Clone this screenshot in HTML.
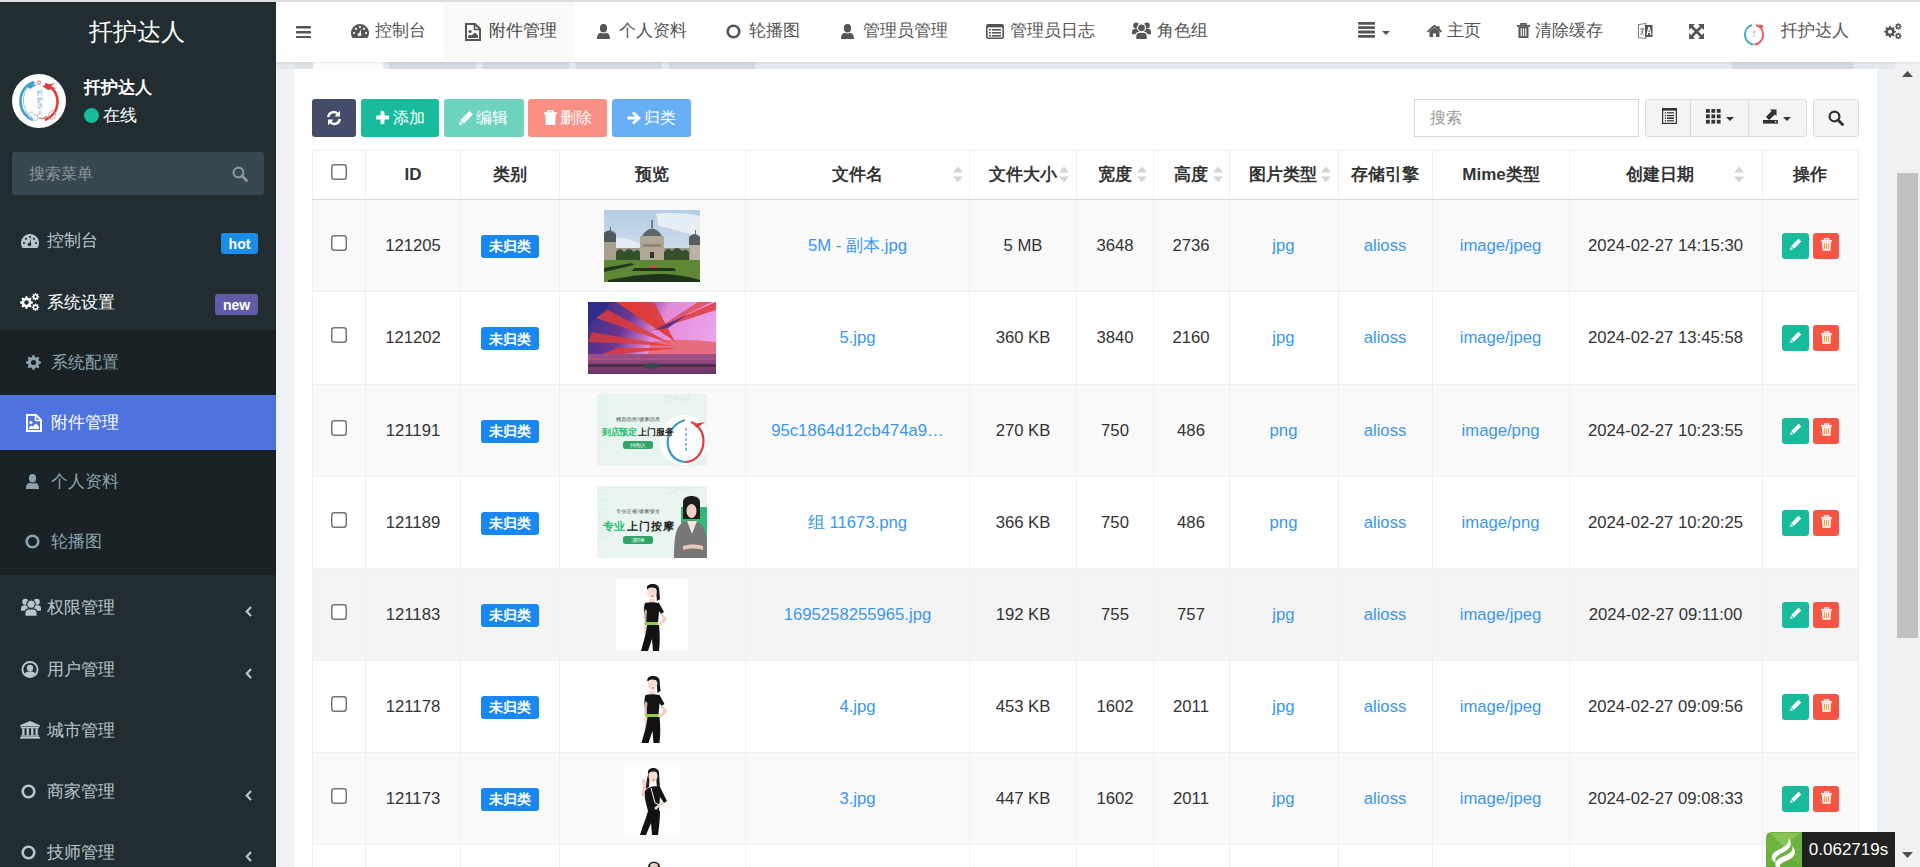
<!DOCTYPE html>
<html><head><meta charset="utf-8"><title>附件管理</title>
<style>
html,body{margin:0;padding:0;width:1920px;height:867px;overflow:hidden;font-family:"Liberation Sans", sans-serif;}
body{position:relative;}
div,span{box-sizing:border-box;}
</style></head><body>
<div style="position:absolute;left:0px;top:0px;width:1920px;height:867px;background:#eef2f5;"></div><div style="position:absolute;left:0px;top:0px;width:1920px;height:2px;background:#dcdde0;"></div><div style="position:absolute;left:0px;top:2px;width:276px;height:865px;background:#222d32;"></div><div style="position:absolute;left:-1.0px;top:16.5px;width:276px;text-align:center;height:30px;line-height:30px;font-size:24px;color:#fff;font-weight:normal;white-space:nowrap;">扦护达人</div><svg style="position:absolute;left:12px;top:74px;" width="54" height="54" viewBox="0 0 54 54"><circle cx="27" cy="27" r="27" fill="#fff"/><path d="M22 8 C13 11 8 19 8.5 28 C9 37 14 43 21 46" fill="none" stroke="#3f9fca" stroke-width="2.6"/><path d="M20 10 C14 14 11 20 11.5 28 C12 35 15 40 20 43" fill="none" stroke="#8cc6df" stroke-width="1"/><path d="M14 12 L24 8 L21 11 L26 10 L18 15Z" fill="#3f9fca"/><path d="M33 10 C41 13 46 20 45.5 29 C45 37 40 43 33 46" fill="none" stroke="#e03c3c" stroke-width="2.6"/><path d="M30 12 L43 9 L38 13 L45 14 L36 16Z" fill="#e03c3c"/><path d="M16 40 C18 37 22 38 22 41 C25 40 27 43 25 46 C21 47 17 45 16 40Z" fill="none" stroke="#b7c4cc" stroke-width="1"/><path d="M38 38 C40 35 44 37 43 40 C45 42 43 45 40 45 C37 46 35 42 38 38Z" fill="none" stroke="#ea9a9a" stroke-width="1"/><path d="M27 44 C30 45 33 44 35 42" fill="none" stroke="#c58a70" stroke-width="1.6"/><circle cx="27" cy="8.5" r="1.6" fill="none" stroke="#e03c3c" stroke-width="0.8"/><text x="24.5" y="21" font-size="5.5" fill="#4a9cc8" font-family="Liberation Sans">扦</text><text x="24.5" y="27.5" font-size="5.5" fill="#4a9cc8">护</text><text x="24.5" y="34" font-size="5.5" fill="#4a9cc8">达</text><text x="24.5" y="40.5" font-size="5.5" fill="#4a9cc8">人</text></svg><div style="position:absolute;left:84px;top:75.5px;height:23px;line-height:23px;font-size:17px;color:#fff;font-weight:bold;white-space:nowrap;">扦护达人</div><svg style="position:absolute;left:84px;top:108px;" width="15" height="15" viewBox="0 0 15 15"><circle cx="7.5" cy="7.5" r="7.5" fill="#18bc9c"/></svg><div style="position:absolute;left:103px;top:104.0px;height:23px;line-height:23px;font-size:17px;color:#fff;font-weight:normal;white-space:nowrap;">在线</div><div style="position:absolute;left:12px;top:152px;width:252px;height:43px;background:#374850;border-radius:3px;"></div><div style="position:absolute;left:28.5px;top:162.75px;height:21.5px;line-height:21.5px;font-size:15.5px;color:#8b9499;font-weight:normal;white-space:nowrap;">搜索菜单</div><svg style="position:absolute;left:232px;top:166px;" width="16" height="16" viewBox="0 0 16 16"><circle cx="6.5" cy="6.5" r="4.9" fill="none" stroke="#8b9499" stroke-width="2.2"/><path d="M10 10 L14.5 14.5" stroke="#8b9499" stroke-width="2.8000000000000003" stroke-linecap="round"/></svg><svg style="position:absolute;left:21px;top:234px;" width="18" height="14" viewBox="0 0 18 14"><path d="M1.5 14 A9 9 0 1 1 16.5 14 Z" fill="#b8c7ce"/><circle cx="3" cy="9" r="1.1" fill="#222d32"/><circle cx="5" cy="4.8" r="1.1" fill="#222d32"/><circle cx="9" cy="3" r="1.1" fill="#222d32"/><circle cx="13" cy="4.8" r="1.1" fill="#222d32"/><circle cx="15" cy="9" r="1.1" fill="#222d32"/><circle cx="8.5" cy="10.5" r="1.8" fill="#222d32"/><path d="M8 10 L10.3 4.5 L9.6 10.8Z" fill="#222d32"/></svg><div style="position:absolute;left:47px;top:228.5px;height:23px;line-height:23px;font-size:17px;color:#b8c7ce;font-weight:normal;white-space:nowrap;">控制台</div><div style="position:absolute;left:221px;top:233px;width:37px;height:21px;background:#1a8de8;border-radius:3px;"></div><div style="position:absolute;left:221.0px;top:233.5px;width:37px;text-align:center;height:20px;line-height:20px;font-size:14px;color:#fff;font-weight:bold;white-space:nowrap;">hot</div><svg style="position:absolute;left:20px;top:293px;" width="20" height="18" viewBox="0 0 20 18"><polygon points="12.97,8.86 12.97,10.14 11.09,10.89 10.73,11.76 11.52,13.62 10.62,14.52 8.76,13.73 7.89,14.09 7.14,15.97 5.86,15.97 5.11,14.09 4.24,13.73 2.38,14.52 1.48,13.62 2.27,11.76 1.91,10.89 0.03,10.14 0.03,8.86 1.91,8.11 2.27,7.24 1.48,5.38 2.38,4.48 4.24,5.27 5.11,4.91 5.86,3.03 7.14,3.03 7.89,4.91 8.76,5.27 10.62,4.48 11.52,5.38 10.73,7.24 11.09,8.11" fill="#fff"/><circle cx="6.5" cy="9.5" r="2.2" fill="#222d32"/><polygon points="19.28,3.43 19.28,4.17 18.08,4.58 17.88,5.07 18.44,6.21 17.91,6.74 16.77,6.18 16.28,6.38 15.87,7.58 15.13,7.58 14.72,6.38 14.23,6.18 13.09,6.74 12.56,6.21 13.12,5.07 12.92,4.58 11.72,4.17 11.72,3.43 12.92,3.02 13.12,2.53 12.56,1.39 13.09,0.86 14.23,1.42 14.72,1.22 15.13,0.02 15.87,0.02 16.28,1.22 16.77,1.42 17.91,0.86 18.44,1.39 17.88,2.53 18.08,3.02" fill="#fff"/><circle cx="15.5" cy="3.8" r="1.2" fill="#222d32"/><polygon points="19.28,13.83 19.28,14.57 18.08,14.98 17.88,15.47 18.44,16.61 17.91,17.14 16.77,16.58 16.28,16.78 15.87,17.98 15.13,17.98 14.72,16.78 14.23,16.58 13.09,17.14 12.56,16.61 13.12,15.47 12.92,14.98 11.72,14.57 11.72,13.83 12.92,13.42 13.12,12.93 12.56,11.79 13.09,11.26 14.23,11.82 14.72,11.62 15.13,10.42 15.87,10.42 16.28,11.62 16.77,11.82 17.91,11.26 18.44,11.79 17.88,12.93 18.08,13.42" fill="#fff"/><circle cx="15.5" cy="14.2" r="1.2" fill="#222d32"/></svg><div style="position:absolute;left:47px;top:290.5px;height:23px;line-height:23px;font-size:17px;color:#fff;font-weight:normal;white-space:nowrap;">系统设置</div><div style="position:absolute;left:215px;top:294px;width:43px;height:21px;background:#605ca8;border-radius:3px;"></div><div style="position:absolute;left:215.0px;top:294.5px;width:43px;text-align:center;height:20px;line-height:20px;font-size:14px;color:#fff;font-weight:bold;white-space:nowrap;">new</div><div style="position:absolute;left:0px;top:330px;width:276px;height:245px;background:#1a2226;"></div><svg style="position:absolute;left:26px;top:355px;" width="15" height="15" viewBox="0 0 15 15"><polygon points="14.96,6.76 14.96,8.24 12.86,9.13 12.44,10.14 13.30,12.26 12.26,13.30 10.14,12.44 9.13,12.86 8.24,14.96 6.76,14.96 5.87,12.86 4.86,12.44 2.74,13.30 1.70,12.26 2.56,10.14 2.14,9.13 0.04,8.24 0.04,6.76 2.14,5.87 2.56,4.86 1.70,2.74 2.74,1.70 4.86,2.56 5.87,2.14 6.76,0.04 8.24,0.04 9.13,2.14 10.14,2.56 12.26,1.70 13.30,2.74 12.44,4.86 12.86,5.87" fill="#8aa4af"/><circle cx="7.5" cy="7.5" r="2.6" fill="#1a2226"/></svg><div style="position:absolute;left:51px;top:350.5px;height:23px;line-height:23px;font-size:17px;color:#8aa4af;font-weight:normal;white-space:nowrap;">系统配置</div><div style="position:absolute;left:0px;top:395px;width:276px;height:55px;background:#4e73df;"></div><svg style="position:absolute;left:26px;top:414px;" width="16" height="18" viewBox="0 0 16 18"><path d="M1 1 H10 L15 6 V17 H1 Z" fill="none" stroke="#fff" stroke-width="2"/><path d="M9.5 1 V6.5 H15" fill="none" stroke="#fff" stroke-width="1.6"/><circle cx="5" cy="8.5" r="1.6" fill="#fff"/><path d="M3 15 L3 13.2 L5 11.5 L6.5 12.5 L10 9.5 L13 12.5 L13 15Z" fill="#fff"/></svg><div style="position:absolute;left:51px;top:410.5px;height:23px;line-height:23px;font-size:17px;color:#fff;font-weight:normal;white-space:nowrap;">附件管理</div><svg style="position:absolute;left:26px;top:474px;" width="13" height="15" viewBox="0 0 13 15"><ellipse cx="6.5" cy="4.2" rx="3.6" ry="4.2" fill="#8aa4af"/><path d="M0 15 C0 10.5 2 9 4 8.8 C5 9.8 8 9.8 9 8.8 C11 9 13 10.5 13 15 Z" fill="#8aa4af"/></svg><div style="position:absolute;left:51px;top:469.5px;height:23px;line-height:23px;font-size:17px;color:#8aa4af;font-weight:normal;white-space:nowrap;">个人资料</div><svg style="position:absolute;left:25px;top:533.5px;" width="15" height="15" viewBox="0 0 15 15"><circle cx="7.5" cy="7.5" r="5.8" fill="none" stroke="#8aa4af" stroke-width="2.6"/></svg><div style="position:absolute;left:51px;top:529.5px;height:23px;line-height:23px;font-size:17px;color:#8aa4af;font-weight:normal;white-space:nowrap;">轮播图</div><svg style="position:absolute;left:20.5px;top:597.5px;" width="20" height="18.5" viewBox="0 0 19.5 18"><circle cx="4.2" cy="3.6" r="3" fill="#b8c7ce"/><circle cx="15.3" cy="3.6" r="3" fill="#b8c7ce"/><path d="M0 12.5 V10 C0 8 1.5 7 3.5 7 H5 C6.5 7 7.5 8 7.5 10 V12.5Z" fill="#b8c7ce"/><path d="M12 12.5 V10 C12 8 13 7 14.5 7 H16 C18 7 19.5 8 19.5 10 V12.5Z" fill="#b8c7ce"/><circle cx="9.75" cy="6" r="4.1" fill="#b8c7ce" stroke="#222d32" stroke-width="1.2"/><path d="M3.8 18 V14.5 C3.8 12 5.5 10.5 8 10.5 H11.5 C14 10.5 15.7 12 15.7 14.5 V18Z" fill="#b8c7ce" stroke="#222d32" stroke-width="1.2"/></svg><div style="position:absolute;left:47px;top:595.5px;height:23px;line-height:23px;font-size:17px;color:#b8c7ce;font-weight:normal;white-space:nowrap;">权限管理</div><svg style="position:absolute;left:21px;top:661px;" width="18" height="18" viewBox="0 0 18 18"><circle cx="9" cy="8.5" r="8.5" fill="#b8c7ce"/><circle cx="9" cy="8.5" r="6.6" fill="#222d32"/><circle cx="9" cy="6.9" r="3.2" fill="#b8c7ce"/><path d="M3.4 13.4 C4.3 11 6.3 10.3 9 10.3 C11.7 10.3 13.7 11 14.6 13.4 C13.2 15 11.2 15.4 9 15.4 C6.8 15.4 4.8 15 3.4 13.4Z" fill="#b8c7ce"/></svg><div style="position:absolute;left:47px;top:657.5px;height:23px;line-height:23px;font-size:17px;color:#b8c7ce;font-weight:normal;white-space:nowrap;">用户管理</div><svg style="position:absolute;left:19.5px;top:721px;" width="20" height="18" viewBox="0 0 20 18"><path d="M10 0 L20 4.2 V5.5 H0 V4.2 Z" fill="#b8c7ce"/><rect x="1" y="6" width="18" height="1.3" fill="#b8c7ce"/><rect x="2.2" y="7.3" width="2.3" height="7" fill="#b8c7ce"/><rect x="6.6" y="7.3" width="2.3" height="7" fill="#b8c7ce"/><rect x="11.1" y="7.3" width="2.3" height="7" fill="#b8c7ce"/><rect x="15.5" y="7.3" width="2.3" height="7" fill="#b8c7ce"/><rect x="1" y="14.3" width="18" height="1.4" fill="#b8c7ce"/><rect x="0" y="16" width="20" height="1.6" fill="#b8c7ce"/></svg><div style="position:absolute;left:47px;top:718.5px;height:23px;line-height:23px;font-size:17px;color:#b8c7ce;font-weight:normal;white-space:nowrap;">城市管理</div><svg style="position:absolute;left:21px;top:783.5px;" width="15" height="15" viewBox="0 0 15 15"><circle cx="7.5" cy="7.5" r="5.8" fill="none" stroke="#b8c7ce" stroke-width="2.6"/></svg><div style="position:absolute;left:47px;top:779.5px;height:23px;line-height:23px;font-size:17px;color:#b8c7ce;font-weight:normal;white-space:nowrap;">商家管理</div><svg style="position:absolute;left:21px;top:844.5px;" width="15" height="15" viewBox="0 0 15 15"><circle cx="7.5" cy="7.5" r="5.8" fill="none" stroke="#b8c7ce" stroke-width="2.6"/></svg><div style="position:absolute;left:47px;top:840.5px;height:23px;line-height:23px;font-size:17px;color:#b8c7ce;font-weight:normal;white-space:nowrap;">技师管理</div><svg style="position:absolute;left:245px;top:605.5px;" width="8" height="11" viewBox="0 0 8 11"><path d="M6 1 L1.8 5.5 L6 10" fill="none" stroke="#b8c7ce" stroke-width="2.2"/></svg><svg style="position:absolute;left:245px;top:667.5px;" width="8" height="11" viewBox="0 0 8 11"><path d="M6 1 L1.8 5.5 L6 10" fill="none" stroke="#b8c7ce" stroke-width="2.2"/></svg><svg style="position:absolute;left:245px;top:789.5px;" width="8" height="11" viewBox="0 0 8 11"><path d="M6 1 L1.8 5.5 L6 10" fill="none" stroke="#b8c7ce" stroke-width="2.2"/></svg><svg style="position:absolute;left:245px;top:850.5px;" width="8" height="11" viewBox="0 0 8 11"><path d="M6 1 L1.8 5.5 L6 10" fill="none" stroke="#b8c7ce" stroke-width="2.2"/></svg><div style="position:absolute;left:276px;top:2px;width:1644px;height:60px;background:#fff;box-shadow:0 1px 2px rgba(0,0,0,0.08);z-index:2;"></div><div style="position:absolute;left:276px;top:2px;width:1644px;height:60px;z-index:3;"><div style="position:absolute;left:168px;top:0px;width:130px;height:60px;background:#f9f9f8;"></div><svg style="position:absolute;left:19.5px;top:23.5px;" width="15" height="12.5" viewBox="0 0 15 12.5"><rect x="0" y="0.00" width="15" height="2.6" rx="0.8" fill="#555"/><rect x="0" y="4.95" width="15" height="2.6" rx="0.8" fill="#555"/><rect x="0" y="9.90" width="15" height="2.6" rx="0.8" fill="#555"/></svg><svg style="position:absolute;left:74.5px;top:21.5px;" width="18" height="14" viewBox="0 0 18 14"><path d="M1.5 14 A9 9 0 1 1 16.5 14 Z" fill="#555"/><circle cx="3" cy="9" r="1.1" fill="#fff"/><circle cx="5" cy="4.8" r="1.1" fill="#fff"/><circle cx="9" cy="3" r="1.1" fill="#fff"/><circle cx="13" cy="4.8" r="1.1" fill="#fff"/><circle cx="15" cy="9" r="1.1" fill="#fff"/><circle cx="8.5" cy="10.5" r="1.8" fill="#fff"/><path d="M8 10 L10.3 4.5 L9.6 10.8Z" fill="#fff"/></svg><div style="position:absolute;left:98.5px;top:17.0px;height:23px;line-height:23px;font-size:17px;color:#555;font-weight:normal;white-space:nowrap;">控制台</div><svg style="position:absolute;left:189px;top:20.5px;" width="16" height="18" viewBox="0 0 16 18"><path d="M1 1 H10 L15 6 V17 H1 Z" fill="none" stroke="#555" stroke-width="2"/><path d="M9.5 1 V6.5 H15" fill="none" stroke="#555" stroke-width="1.6"/><circle cx="5" cy="8.5" r="1.6" fill="#555"/><path d="M3 15 L3 13.2 L5 11.5 L6.5 12.5 L10 9.5 L13 12.5 L13 15Z" fill="#555"/></svg><div style="position:absolute;left:212.5px;top:17.0px;height:23px;line-height:23px;font-size:17px;color:#444;font-weight:normal;white-space:nowrap;">附件管理</div><svg style="position:absolute;left:321px;top:21.5px;" width="13" height="15" viewBox="0 0 13 15"><ellipse cx="6.5" cy="4.2" rx="3.6" ry="4.2" fill="#555"/><path d="M0 15 C0 10.5 2 9 4 8.8 C5 9.8 8 9.8 9 8.8 C11 9 13 10.5 13 15 Z" fill="#555"/></svg><div style="position:absolute;left:343px;top:17.0px;height:23px;line-height:23px;font-size:17px;color:#555;font-weight:normal;white-space:nowrap;">个人资料</div><svg style="position:absolute;left:450px;top:21.5px;" width="15" height="15" viewBox="0 0 15 15"><circle cx="7.5" cy="7.5" r="5.8" fill="none" stroke="#555" stroke-width="2.6"/></svg><div style="position:absolute;left:472.5px;top:17.0px;height:23px;line-height:23px;font-size:17px;color:#555;font-weight:normal;white-space:nowrap;">轮播图</div><svg style="position:absolute;left:565px;top:21.5px;" width="13" height="15" viewBox="0 0 13 15"><ellipse cx="6.5" cy="4.2" rx="3.6" ry="4.2" fill="#555"/><path d="M0 15 C0 10.5 2 9 4 8.8 C5 9.8 8 9.8 9 8.8 C11 9 13 10.5 13 15 Z" fill="#555"/></svg><div style="position:absolute;left:586.5px;top:17.0px;height:23px;line-height:23px;font-size:17px;color:#555;font-weight:normal;white-space:nowrap;">管理员管理</div><svg style="position:absolute;left:709.5px;top:21.5px;" width="18" height="15" viewBox="0 0 18 15"><rect x="0.8" y="0.8" width="16.4" height="13.4" rx="1.5" fill="none" stroke="#555" stroke-width="1.6"/><rect x="0.8" y="0.8" width="16.4" height="2.6" fill="#555"/><rect x="3" y="5" width="2" height="1.6" fill="#555"/><rect x="6" y="5" width="9" height="1.6" fill="#555"/><rect x="3" y="8" width="2" height="1.6" fill="#555"/><rect x="6" y="8" width="9" height="1.6" fill="#555"/><rect x="3" y="11" width="2" height="1.6" fill="#555"/><rect x="6" y="11" width="9" height="1.6" fill="#555"/></svg><div style="position:absolute;left:733.5px;top:17.0px;height:23px;line-height:23px;font-size:17px;color:#555;font-weight:normal;white-space:nowrap;">管理员日志</div><svg style="position:absolute;left:856px;top:20px;" width="19" height="17.5" viewBox="0 0 19.5 18"><circle cx="4.2" cy="3.6" r="3" fill="#555"/><circle cx="15.3" cy="3.6" r="3" fill="#555"/><path d="M0 12.5 V10 C0 8 1.5 7 3.5 7 H5 C6.5 7 7.5 8 7.5 10 V12.5Z" fill="#555"/><path d="M12 12.5 V10 C12 8 13 7 14.5 7 H16 C18 7 19.5 8 19.5 10 V12.5Z" fill="#555"/><circle cx="9.75" cy="6" r="4.1" fill="#555" stroke="#fff" stroke-width="1.2"/><path d="M3.8 18 V14.5 C3.8 12 5.5 10.5 8 10.5 H11.5 C14 10.5 15.7 12 15.7 14.5 V18Z" fill="#555" stroke="#fff" stroke-width="1.2"/></svg><div style="position:absolute;left:880.5px;top:17.0px;height:23px;line-height:23px;font-size:17px;color:#555;font-weight:normal;white-space:nowrap;">角色组</div><svg style="position:absolute;left:1082px;top:20px;" width="17" height="16" viewBox="0 0 17 16"><rect x="0" y="0.00" width="17" height="2.8" rx="0.8" fill="#555"/><rect x="0" y="4.30" width="17" height="2.8" rx="0.8" fill="#555"/><rect x="0" y="8.60" width="17" height="2.8" rx="0.8" fill="#555"/><rect x="0" y="12.90" width="17" height="2.8" rx="0.8" fill="#555"/></svg><svg style="position:absolute;left:1106px;top:29px;" width="8" height="4" viewBox="0 0 8 4"><path d="M0 0 H8 L4 4Z" fill="#555"/></svg><svg style="position:absolute;left:1151px;top:22.5px;" width="15" height="12.5" viewBox="0 0 15 12.5"><path d="M0.5 6.8 L7.5 0.8 L14.5 6.8" fill="none" stroke="#555" stroke-width="1.8" stroke-linejoin="round"/><path d="M2.5 6.5 L7.5 2.5 L12.5 6.5 V12 H9 V8.5 H6 V12 H2.5Z" fill="#555"/><rect x="10.5" y="1" width="2" height="3.5" fill="#555"/></svg><div style="position:absolute;left:1170.5px;top:17.0px;height:23px;line-height:23px;font-size:17px;color:#555;font-weight:normal;white-space:nowrap;">主页</div><svg style="position:absolute;left:1241px;top:21px;" width="13" height="15" viewBox="0 0 13 15"><rect x="0" y="2" width="13" height="1.8" fill="#555"/><path d="M4 2.2 V0.9 H9 V2.2" fill="none" stroke="#555" stroke-width="1.6"/><path d="M1.5 3.8 H11.5 V14.2 Q11.5 15 10.7 15 H2.3 Q1.5 15 1.5 14.2Z" fill="#555"/><rect x="3.6" y="5.3" width="1.2" height="8" fill="#fff"/><rect x="5.9" y="5.3" width="1.2" height="8" fill="#fff"/><rect x="8.2" y="5.3" width="1.2" height="8" fill="#fff"/></svg><div style="position:absolute;left:1259px;top:17.0px;height:23px;line-height:23px;font-size:17px;color:#555;font-weight:normal;white-space:nowrap;">清除缓存</div><svg style="position:absolute;left:1362px;top:20.5px;" width="15" height="16" viewBox="0 0 15 16"><path d="M0.5 1.5 L8 0.5 V15.5 L0.5 14.5Z" fill="#fff" stroke="#555" stroke-width="0.8"/><path d="M7 2 H14.5 V14 H7Z" fill="#555"/><path d="M9 12 L10.7 4.5 H11.3 L13 12 M9.8 9.5 H12.2" fill="none" stroke="#fff" stroke-width="1.2"/><path d="M2 6 H6 M4 5 V6 M2.5 12 C4 10 5 8 5.2 6 M3.5 8 C4 10 5 11 6 12" fill="none" stroke="#555" stroke-width="0.8"/></svg><svg style="position:absolute;left:1412.5px;top:21.5px;" width="15" height="15" viewBox="0 0 15 15"><path d="M0 0 H6 L0 6Z M15 0 H9 L15 6Z M0 15 H6 L0 9Z M15 15 H9 L15 9Z" fill="#555"/><path d="M2 2 L13 13 M13 2 L2 13" stroke="#555" stroke-width="2.8"/></svg><svg style="position:absolute;left:1467px;top:20.5px;" width="22" height="23" viewBox="0 0 22 23"><path d="M9 2 C4 3.5 1.5 8 2 13 C2.5 17.5 6 21 10.5 21.5" fill="none" stroke="#4ba3c7" stroke-width="2"/><path d="M13 2 C18 3.5 20.5 8 20 13 C19.5 17.5 16 21 11.5 21.5" fill="none" stroke="#e8595b" stroke-width="2"/><path d="M16 1 L21 3 L18 6Z" fill="#e8595b"/><path d="M11 7 V14 M9 9 H13" stroke="#9cc" stroke-width="0.8"/></svg><div style="position:absolute;left:1505px;top:17.0px;height:23px;line-height:23px;font-size:17px;color:#555;font-weight:normal;white-space:nowrap;">扦护达人</div><svg style="position:absolute;left:1608px;top:20.5px;" width="18" height="16.5" viewBox="0 0 19.5 18"><polygon points="12.97,8.86 12.97,10.14 11.09,10.89 10.73,11.76 11.52,13.62 10.62,14.52 8.76,13.73 7.89,14.09 7.14,15.97 5.86,15.97 5.11,14.09 4.24,13.73 2.38,14.52 1.48,13.62 2.27,11.76 1.91,10.89 0.03,10.14 0.03,8.86 1.91,8.11 2.27,7.24 1.48,5.38 2.38,4.48 4.24,5.27 5.11,4.91 5.86,3.03 7.14,3.03 7.89,4.91 8.76,5.27 10.62,4.48 11.52,5.38 10.73,7.24 11.09,8.11" fill="#555"/><circle cx="6.5" cy="9.5" r="2.2" fill="#fff"/><polygon points="19.28,3.43 19.28,4.17 18.08,4.58 17.88,5.07 18.44,6.21 17.91,6.74 16.77,6.18 16.28,6.38 15.87,7.58 15.13,7.58 14.72,6.38 14.23,6.18 13.09,6.74 12.56,6.21 13.12,5.07 12.92,4.58 11.72,4.17 11.72,3.43 12.92,3.02 13.12,2.53 12.56,1.39 13.09,0.86 14.23,1.42 14.72,1.22 15.13,0.02 15.87,0.02 16.28,1.22 16.77,1.42 17.91,0.86 18.44,1.39 17.88,2.53 18.08,3.02" fill="#555"/><circle cx="15.5" cy="3.8" r="1.2" fill="#fff"/><polygon points="19.28,13.83 19.28,14.57 18.08,14.98 17.88,15.47 18.44,16.61 17.91,17.14 16.77,16.58 16.28,16.78 15.87,17.98 15.13,17.98 14.72,16.78 14.23,16.58 13.09,17.14 12.56,16.61 13.12,15.47 12.92,14.98 11.72,14.57 11.72,13.83 12.92,13.42 13.12,12.93 12.56,11.79 13.09,11.26 14.23,11.82 14.72,11.62 15.13,10.42 15.87,10.42 16.28,11.62 16.77,11.82 17.91,11.26 18.44,11.79 17.88,12.93 18.08,13.42" fill="#555"/><circle cx="15.5" cy="14.2" r="1.2" fill="#fff"/></svg></div><div style="position:absolute;left:276px;top:62px;width:1619px;height:7px;background:#e4e8ec;"></div><div style="position:absolute;left:294px;top:62px;width:19px;height:7px;background:#dfe3e8;"></div><div style="position:absolute;left:313px;top:62px;width:70px;height:7px;background:#fbfbfc;"></div><div style="position:absolute;left:389px;top:62px;width:87px;height:7px;background:#d3d9e0;"></div><div style="position:absolute;left:483px;top:62px;width:86px;height:7px;background:#d3d9e0;"></div><div style="position:absolute;left:576px;top:62px;width:86px;height:7px;background:#d3d9e0;"></div><div style="position:absolute;left:669px;top:62px;width:86px;height:7px;background:#d3d9e0;"></div><div style="position:absolute;left:1732px;top:62px;width:121px;height:7px;background:#d3d9e0;"></div><div style="position:absolute;left:294px;top:69px;width:1583px;height:798px;background:#fff;"></div><div style="position:absolute;left:312px;top:99px;width:44px;height:38px;background:#444c69;border-radius:3px;"></div><svg style="position:absolute;left:326px;top:110px;" width="16" height="16" viewBox="0 0 16 16"><path d="M2.2 7 A5.5 5.5 0 0 1 12 4.2" fill="none" stroke="#fff" stroke-width="2.4"/><path d="M14 0.8 V6.5 H8.5Z" fill="#fff"/><path d="M13.8 9 A5.5 5.5 0 0 1 4 11.8" fill="none" stroke="#fff" stroke-width="2.4"/><path d="M2 15.2 V9.5 H7.5Z" fill="#fff"/></svg><div style="position:absolute;left:361px;top:99px;width:78px;height:38px;background:#18bc9c;border-radius:3px;"></div><svg style="position:absolute;left:376px;top:111.0px;" width="13" height="13" viewBox="0 0 13 13"><rect x="4.6" y="0" width="3.8" height="13" rx="0.8" fill="#fff"/><rect x="0" y="4.6" width="13" height="3.8" rx="0.8" fill="#fff"/></svg><div style="position:absolute;left:392.5px;top:106.5px;height:22px;line-height:22px;font-size:16px;color:#fff;font-weight:normal;white-space:nowrap;">添加</div><div style="position:absolute;left:444px;top:99px;width:80px;height:38px;background:#6dd3bf;border-radius:3px;"></div><svg style="position:absolute;left:459px;top:110.0px;" width="15" height="15" viewBox="0 0 15 15"><path d="M10.5 1 L14 4.5 L5 13.5 L1.5 10Z" fill="#fff"/><path d="M1 11 L4 14 L0 15Z" fill="#fff"/></svg><div style="position:absolute;left:476px;top:106.5px;height:22px;line-height:22px;font-size:16px;color:#fff;font-weight:normal;white-space:nowrap;">编辑</div><div style="position:absolute;left:528px;top:99px;width:79px;height:38px;background:#fa9085;border-radius:3px;"></div><svg style="position:absolute;left:544px;top:110.0px;" width="13" height="15" viewBox="0 0 13 15"><rect x="0" y="2.2" width="13" height="1.8" fill="#fff"/><path d="M4 2.2 V0.8 H9 V2.2" fill="none" stroke="#fff" stroke-width="1.5"/><path d="M1.2 4 H11.8 L11.2 15 H1.8Z" fill="#fff"/><rect x="3.3" y="5.5" width="1.2" height="7" fill="#fff" opacity="0"/></svg><div style="position:absolute;left:560px;top:106.5px;height:22px;line-height:22px;font-size:16px;color:#fff;font-weight:normal;white-space:nowrap;">删除</div><div style="position:absolute;left:612px;top:99px;width:79px;height:38px;background:#67aff5;border-radius:3px;"></div><svg style="position:absolute;left:627px;top:110.5px;" width="14" height="14" viewBox="0 0 14 14"><path d="M7 0.5 L14 7 L7 13.5 L5 11.5 L8.3 8.5 H0.5 V5.5 H8.3 L5 2.5Z" fill="#fff"/></svg><div style="position:absolute;left:644px;top:106.5px;height:22px;line-height:22px;font-size:16px;color:#fff;font-weight:normal;white-space:nowrap;">归类</div><div style="position:absolute;left:1414px;top:99px;width:225px;height:38px;background:#fff;border:1px solid #d2d6de;"></div><div style="position:absolute;left:1430px;top:107.0px;height:22px;line-height:22px;font-size:16px;color:#999;font-weight:normal;white-space:nowrap;">搜索</div><div style="position:absolute;left:1645px;top:99px;width:162px;height:38px;background:#f4f4f4;border:1px solid #ddd;border-radius:3px;"></div><div style="position:absolute;left:1690px;top:99px;width:1px;height:38px;background:#ddd;"></div><div style="position:absolute;left:1748px;top:99px;width:1px;height:38px;background:#ddd;"></div><svg style="position:absolute;left:1661.5px;top:108px;" width="15" height="16" viewBox="0 0 15 16"><rect x="0.6" y="0.6" width="13.8" height="14.8" fill="none" stroke="#333" stroke-width="1.2"/><rect x="0" y="0" width="15" height="2.6" fill="#333"/><rect x="2.8" y="4.2" width="1.3" height="1.3" fill="#333"/><rect x="5" y="4.2" width="7" height="1.2" fill="#333"/><rect x="2.8" y="7" width="1.3" height="1.3" fill="#333"/><rect x="5" y="7" width="7" height="1.2" fill="#333"/><rect x="2.8" y="9.6" width="1.3" height="1.3" fill="#333"/><rect x="5" y="9.4" width="7" height="1.6" fill="#333"/><rect x="2.8" y="12.2" width="1.3" height="1.3" fill="#333"/><rect x="5" y="12.2" width="7" height="1.2" fill="#333"/></svg><svg style="position:absolute;left:1706px;top:109px;" width="15" height="15" viewBox="0 0 15 15"><rect x="0.0" y="0.0" width="3.8" height="3.8" fill="#333"/><rect x="5.4" y="0.0" width="3.8" height="3.8" fill="#333"/><rect x="10.8" y="0.0" width="3.8" height="3.8" fill="#333"/><rect x="0.0" y="5.4" width="3.8" height="3.8" fill="#333"/><rect x="5.4" y="5.4" width="3.8" height="3.8" fill="#333"/><rect x="10.8" y="5.4" width="3.8" height="3.8" fill="#333"/><rect x="0.0" y="10.8" width="3.8" height="3.8" fill="#333"/><rect x="5.4" y="10.8" width="3.8" height="3.8" fill="#333"/><rect x="10.8" y="10.8" width="3.8" height="3.8" fill="#333"/></svg><svg style="position:absolute;left:1726px;top:117px;" width="8" height="4" viewBox="0 0 8 4"><path d="M0 0 H8 L4 4Z" fill="#333"/></svg><svg style="position:absolute;left:1763px;top:108px;" width="15" height="16" viewBox="0 0 15 16"><rect x="0" y="12" width="15" height="3.6" fill="#333"/><rect x="12" y="13" width="1.3" height="1.3" fill="#f4f4f4"/><path d="M4 10 L3 8.8 L8.5 3.2 L6.8 1.5 H13.5 V8.2 L11.8 6.5 L6.2 12Z" fill="#333"/></svg><svg style="position:absolute;left:1783px;top:117px;" width="8" height="4" viewBox="0 0 8 4"><path d="M0 0 H8 L4 4Z" fill="#333"/></svg><div style="position:absolute;left:1813px;top:99px;width:46px;height:38px;background:#f4f4f4;border:1px solid #ddd;border-radius:3px;"></div><svg style="position:absolute;left:1828px;top:110px;" width="16" height="16" viewBox="0 0 16 16"><circle cx="6.5" cy="6.5" r="4.9" fill="none" stroke="#333" stroke-width="2.3"/><path d="M10 10 L14.5 14.5" stroke="#333" stroke-width="2.9" stroke-linecap="round"/></svg><div style="position:absolute;left:312px;top:150px;width:1546px;height:49px;background:#fff;border-top:1px solid #f0f0f0;"></div><div style="position:absolute;left:312px;top:200px;width:1546px;height:91px;background:#f9f9f9;"></div><div style="position:absolute;left:312px;top:291px;width:1546px;height:1px;background:#f0f0f0;"></div><div style="position:absolute;left:312px;top:292px;width:1546px;height:92px;background:#fff;"></div><div style="position:absolute;left:312px;top:384px;width:1546px;height:1px;background:#f0f0f0;"></div><div style="position:absolute;left:312px;top:385px;width:1546px;height:91px;background:#f9f9f9;"></div><div style="position:absolute;left:312px;top:476px;width:1546px;height:1px;background:#f0f0f0;"></div><div style="position:absolute;left:312px;top:477px;width:1546px;height:91px;background:#fff;"></div><div style="position:absolute;left:312px;top:568px;width:1546px;height:1px;background:#f0f0f0;"></div><div style="position:absolute;left:312px;top:569px;width:1546px;height:91px;background:#f4f4f4;"></div><div style="position:absolute;left:312px;top:660px;width:1546px;height:1px;background:#f0f0f0;"></div><div style="position:absolute;left:312px;top:661px;width:1546px;height:91px;background:#fff;"></div><div style="position:absolute;left:312px;top:752px;width:1546px;height:1px;background:#f0f0f0;"></div><div style="position:absolute;left:312px;top:753px;width:1546px;height:91px;background:#f9f9f9;"></div><div style="position:absolute;left:312px;top:844px;width:1546px;height:1px;background:#f0f0f0;"></div><div style="position:absolute;left:312px;top:845px;width:1546px;height:22px;background:#fff;"></div><div style="position:absolute;left:312px;top:150px;width:1px;height:717px;background:#f0f0f0;"></div><div style="position:absolute;left:365px;top:150px;width:1px;height:717px;background:#f0f0f0;"></div><div style="position:absolute;left:460px;top:150px;width:1px;height:717px;background:#f0f0f0;"></div><div style="position:absolute;left:559px;top:150px;width:1px;height:717px;background:#f0f0f0;"></div><div style="position:absolute;left:745px;top:150px;width:1px;height:717px;background:#f0f0f0;"></div><div style="position:absolute;left:969px;top:150px;width:1px;height:717px;background:#f0f0f0;"></div><div style="position:absolute;left:1076px;top:150px;width:1px;height:717px;background:#f0f0f0;"></div><div style="position:absolute;left:1153px;top:150px;width:1px;height:717px;background:#f0f0f0;"></div><div style="position:absolute;left:1229px;top:150px;width:1px;height:717px;background:#f0f0f0;"></div><div style="position:absolute;left:1338px;top:150px;width:1px;height:717px;background:#f0f0f0;"></div><div style="position:absolute;left:1432px;top:150px;width:1px;height:717px;background:#f0f0f0;"></div><div style="position:absolute;left:1569px;top:150px;width:1px;height:717px;background:#f0f0f0;"></div><div style="position:absolute;left:1762px;top:150px;width:1px;height:717px;background:#f0f0f0;"></div><div style="position:absolute;left:1858px;top:150px;width:1px;height:717px;background:#f0f0f0;"></div><div style="position:absolute;left:312px;top:199px;width:1546px;height:1px;background:#dadada;"></div><svg style="position:absolute;left:331px;top:164px;" width="16" height="16" viewBox="0 0 16 16"><rect x="0.75" y="0.75" width="14.5" height="14.5" rx="2.5" fill="#fff" stroke="#767676" stroke-width="1.5"/></svg><div style="position:absolute;left:313.0px;top:162.5px;width:200px;text-align:center;height:23px;line-height:23px;font-size:17px;color:#333;font-weight:bold;white-space:nowrap;">ID</div><div style="position:absolute;left:409.5px;top:162.5px;width:200px;text-align:center;height:23px;line-height:23px;font-size:17px;color:#333;font-weight:bold;white-space:nowrap;">类别</div><div style="position:absolute;left:552.0px;top:162.5px;width:200px;text-align:center;height:23px;line-height:23px;font-size:17px;color:#333;font-weight:bold;white-space:nowrap;">预览</div><div style="position:absolute;left:757.5px;top:162.5px;width:200px;text-align:center;height:23px;line-height:23px;font-size:17px;color:#333;font-weight:bold;white-space:nowrap;">文件名</div><svg style="position:absolute;left:952.5px;top:166px;" width="10" height="17" viewBox="0 0 10 16"><path d="M5 0 L10 6 H0Z M5 16 L10 10 H0Z" fill="#d5d5d5"/></svg><div style="position:absolute;left:923.0px;top:162.5px;width:200px;text-align:center;height:23px;line-height:23px;font-size:17px;color:#333;font-weight:bold;white-space:nowrap;">文件大小</div><svg style="position:absolute;left:1059px;top:166px;" width="10" height="17" viewBox="0 0 10 16"><path d="M5 0 L10 6 H0Z M5 16 L10 10 H0Z" fill="#d5d5d5"/></svg><div style="position:absolute;left:1014.7px;top:162.5px;width:200px;text-align:center;height:23px;line-height:23px;font-size:17px;color:#333;font-weight:bold;white-space:nowrap;">宽度</div><svg style="position:absolute;left:1137px;top:166px;" width="10" height="17" viewBox="0 0 10 16"><path d="M5 0 L10 6 H0Z M5 16 L10 10 H0Z" fill="#d5d5d5"/></svg><div style="position:absolute;left:1091.4px;top:162.5px;width:200px;text-align:center;height:23px;line-height:23px;font-size:17px;color:#333;font-weight:bold;white-space:nowrap;">高度</div><svg style="position:absolute;left:1212.5px;top:166px;" width="10" height="17" viewBox="0 0 10 16"><path d="M5 0 L10 6 H0Z M5 16 L10 10 H0Z" fill="#d5d5d5"/></svg><div style="position:absolute;left:1183.3px;top:162.5px;width:200px;text-align:center;height:23px;line-height:23px;font-size:17px;color:#333;font-weight:bold;white-space:nowrap;">图片类型</div><svg style="position:absolute;left:1321px;top:166px;" width="10" height="17" viewBox="0 0 10 16"><path d="M5 0 L10 6 H0Z M5 16 L10 10 H0Z" fill="#d5d5d5"/></svg><div style="position:absolute;left:1285.0px;top:162.5px;width:200px;text-align:center;height:23px;line-height:23px;font-size:17px;color:#333;font-weight:bold;white-space:nowrap;">存储引擎</div><div style="position:absolute;left:1401.0px;top:162.5px;width:200px;text-align:center;height:23px;line-height:23px;font-size:17px;color:#333;font-weight:bold;white-space:nowrap;">Mime类型</div><div style="position:absolute;left:1559.5px;top:162.5px;width:200px;text-align:center;height:23px;line-height:23px;font-size:17px;color:#333;font-weight:bold;white-space:nowrap;">创建日期</div><svg style="position:absolute;left:1734px;top:166px;" width="10" height="17" viewBox="0 0 10 16"><path d="M5 0 L10 6 H0Z M5 16 L10 10 H0Z" fill="#d5d5d5"/></svg><div style="position:absolute;left:1710.0px;top:162.5px;width:200px;text-align:center;height:23px;line-height:23px;font-size:17px;color:#333;font-weight:bold;white-space:nowrap;">操作</div><svg style="position:absolute;left:331px;top:234.5px;" width="16" height="16" viewBox="0 0 16 16"><rect x="0.75" y="0.75" width="14.5" height="14.5" rx="2.5" fill="#fff" stroke="#767676" stroke-width="1.5"/></svg><div style="position:absolute;left:368.0px;top:234.95000000000002px;width:90px;text-align:center;height:22.7px;line-height:22.7px;font-size:16.7px;color:#333;font-weight:normal;white-space:nowrap;">121205</div><div style="position:absolute;left:481px;top:234.5px;width:58px;height:23px;background:#1888f0;border-radius:3px;"></div><div style="position:absolute;left:481.0px;top:236.0px;width:58px;text-align:center;height:20px;line-height:20px;font-size:14px;color:#fff;font-weight:bold;white-space:nowrap;">未归类</div><div style="position:absolute;left:747.5px;top:234.95000000000002px;width:220px;text-align:center;height:22.7px;line-height:22.7px;font-size:16.7px;color:#3a97f0;font-weight:normal;white-space:nowrap;">5M - 副本.jpg</div><div style="position:absolute;left:970.5px;top:234.95000000000002px;width:105px;text-align:center;height:22.7px;line-height:22.7px;font-size:16.7px;color:#333;font-weight:normal;white-space:nowrap;">5 MB</div><div style="position:absolute;left:1077.5px;top:234.95000000000002px;width:75px;text-align:center;height:22.7px;line-height:22.7px;font-size:16.7px;color:#333;font-weight:normal;white-space:nowrap;">3648</div><div style="position:absolute;left:1153.5px;top:234.95000000000002px;width:75px;text-align:center;height:22.7px;line-height:22.7px;font-size:16.7px;color:#333;font-weight:normal;white-space:nowrap;">2736</div><div style="position:absolute;left:1231.0px;top:234.95000000000002px;width:105px;text-align:center;height:22.7px;line-height:22.7px;font-size:16.7px;color:#3a97f0;font-weight:normal;white-space:nowrap;">jpg</div><div style="position:absolute;left:1339.0px;top:234.95000000000002px;width:92px;text-align:center;height:22.7px;line-height:22.7px;font-size:16.7px;color:#3a97f0;font-weight:normal;white-space:nowrap;">alioss</div><div style="position:absolute;left:1433.0px;top:234.95000000000002px;width:135px;text-align:center;height:22.7px;line-height:22.7px;font-size:16.7px;color:#3a97f0;font-weight:normal;white-space:nowrap;">image/jpeg</div><div style="position:absolute;left:1570.5px;top:234.95000000000002px;width:190px;text-align:center;height:22.7px;line-height:22.7px;font-size:16.7px;color:#333;font-weight:normal;white-space:nowrap;">2024-02-27 14:15:30</div><div style="position:absolute;left:1782px;top:232.5px;width:27px;height:26px;background:#18bc9c;border-radius:3px;"></div><svg style="position:absolute;left:1789.5px;top:238.0px;" width="12" height="12" viewBox="0 0 15 15"><path d="M10.5 1 L14 4.5 L5 13.5 L1.5 10Z" fill="#fff"/><path d="M1 11 L4 14 L0 15Z" fill="#fff"/></svg><div style="position:absolute;left:1813px;top:232.5px;width:26px;height:26px;background:#f75444;border-radius:3px;"></div><svg style="position:absolute;left:1820.5px;top:238.0px;" width="11" height="13" viewBox="0 0 13 15"><rect x="0" y="2.2" width="13" height="1.8" fill="#fff"/><path d="M4 2.2 V0.8 H9 V2.2" fill="none" stroke="#fff" stroke-width="1.5"/><path d="M1.2 4 H11.8 L11.2 15 H1.8Z" fill="#fff"/><rect x="3.4" y="5.5" width="1.3" height="7.5" fill="#f7a144"/><rect x="5.85" y="5.5" width="1.3" height="7.5" fill="#f7a144"/><rect x="8.3" y="5.5" width="1.3" height="7.5" fill="#f7a144"/></svg><svg style="position:absolute;left:331px;top:327.0px;" width="16" height="16" viewBox="0 0 16 16"><rect x="0.75" y="0.75" width="14.5" height="14.5" rx="2.5" fill="#fff" stroke="#767676" stroke-width="1.5"/></svg><div style="position:absolute;left:368.0px;top:327.45px;width:90px;text-align:center;height:22.7px;line-height:22.7px;font-size:16.7px;color:#333;font-weight:normal;white-space:nowrap;">121202</div><div style="position:absolute;left:481px;top:327.0px;width:58px;height:23px;background:#1888f0;border-radius:3px;"></div><div style="position:absolute;left:481.0px;top:328.5px;width:58px;text-align:center;height:20px;line-height:20px;font-size:14px;color:#fff;font-weight:bold;white-space:nowrap;">未归类</div><div style="position:absolute;left:747.5px;top:327.45px;width:220px;text-align:center;height:22.7px;line-height:22.7px;font-size:16.7px;color:#3a97f0;font-weight:normal;white-space:nowrap;">5.jpg</div><div style="position:absolute;left:970.5px;top:327.45px;width:105px;text-align:center;height:22.7px;line-height:22.7px;font-size:16.7px;color:#333;font-weight:normal;white-space:nowrap;">360 KB</div><div style="position:absolute;left:1077.5px;top:327.45px;width:75px;text-align:center;height:22.7px;line-height:22.7px;font-size:16.7px;color:#333;font-weight:normal;white-space:nowrap;">3840</div><div style="position:absolute;left:1153.5px;top:327.45px;width:75px;text-align:center;height:22.7px;line-height:22.7px;font-size:16.7px;color:#333;font-weight:normal;white-space:nowrap;">2160</div><div style="position:absolute;left:1231.0px;top:327.45px;width:105px;text-align:center;height:22.7px;line-height:22.7px;font-size:16.7px;color:#3a97f0;font-weight:normal;white-space:nowrap;">jpg</div><div style="position:absolute;left:1339.0px;top:327.45px;width:92px;text-align:center;height:22.7px;line-height:22.7px;font-size:16.7px;color:#3a97f0;font-weight:normal;white-space:nowrap;">alioss</div><div style="position:absolute;left:1433.0px;top:327.45px;width:135px;text-align:center;height:22.7px;line-height:22.7px;font-size:16.7px;color:#3a97f0;font-weight:normal;white-space:nowrap;">image/jpeg</div><div style="position:absolute;left:1570.5px;top:327.45px;width:190px;text-align:center;height:22.7px;line-height:22.7px;font-size:16.7px;color:#333;font-weight:normal;white-space:nowrap;">2024-02-27 13:45:58</div><div style="position:absolute;left:1782px;top:325.0px;width:27px;height:26px;background:#18bc9c;border-radius:3px;"></div><svg style="position:absolute;left:1789.5px;top:330.5px;" width="12" height="12" viewBox="0 0 15 15"><path d="M10.5 1 L14 4.5 L5 13.5 L1.5 10Z" fill="#fff"/><path d="M1 11 L4 14 L0 15Z" fill="#fff"/></svg><div style="position:absolute;left:1813px;top:325.0px;width:26px;height:26px;background:#f75444;border-radius:3px;"></div><svg style="position:absolute;left:1820.5px;top:330.5px;" width="11" height="13" viewBox="0 0 13 15"><rect x="0" y="2.2" width="13" height="1.8" fill="#fff"/><path d="M4 2.2 V0.8 H9 V2.2" fill="none" stroke="#fff" stroke-width="1.5"/><path d="M1.2 4 H11.8 L11.2 15 H1.8Z" fill="#fff"/><rect x="3.4" y="5.5" width="1.3" height="7.5" fill="#f7a144"/><rect x="5.85" y="5.5" width="1.3" height="7.5" fill="#f7a144"/><rect x="8.3" y="5.5" width="1.3" height="7.5" fill="#f7a144"/></svg><svg style="position:absolute;left:331px;top:419.5px;" width="16" height="16" viewBox="0 0 16 16"><rect x="0.75" y="0.75" width="14.5" height="14.5" rx="2.5" fill="#fff" stroke="#767676" stroke-width="1.5"/></svg><div style="position:absolute;left:368.0px;top:419.95px;width:90px;text-align:center;height:22.7px;line-height:22.7px;font-size:16.7px;color:#333;font-weight:normal;white-space:nowrap;">121191</div><div style="position:absolute;left:481px;top:419.5px;width:58px;height:23px;background:#1888f0;border-radius:3px;"></div><div style="position:absolute;left:481.0px;top:421.0px;width:58px;text-align:center;height:20px;line-height:20px;font-size:14px;color:#fff;font-weight:bold;white-space:nowrap;">未归类</div><div style="position:absolute;left:747.5px;top:419.95px;width:220px;text-align:center;height:22.7px;line-height:22.7px;font-size:16.7px;color:#3a97f0;font-weight:normal;white-space:nowrap;">95c1864d12cb474a9…</div><div style="position:absolute;left:970.5px;top:419.95px;width:105px;text-align:center;height:22.7px;line-height:22.7px;font-size:16.7px;color:#333;font-weight:normal;white-space:nowrap;">270 KB</div><div style="position:absolute;left:1077.5px;top:419.95px;width:75px;text-align:center;height:22.7px;line-height:22.7px;font-size:16.7px;color:#333;font-weight:normal;white-space:nowrap;">750</div><div style="position:absolute;left:1153.5px;top:419.95px;width:75px;text-align:center;height:22.7px;line-height:22.7px;font-size:16.7px;color:#333;font-weight:normal;white-space:nowrap;">486</div><div style="position:absolute;left:1231.0px;top:419.95px;width:105px;text-align:center;height:22.7px;line-height:22.7px;font-size:16.7px;color:#3a97f0;font-weight:normal;white-space:nowrap;">png</div><div style="position:absolute;left:1339.0px;top:419.95px;width:92px;text-align:center;height:22.7px;line-height:22.7px;font-size:16.7px;color:#3a97f0;font-weight:normal;white-space:nowrap;">alioss</div><div style="position:absolute;left:1433.0px;top:419.95px;width:135px;text-align:center;height:22.7px;line-height:22.7px;font-size:16.7px;color:#3a97f0;font-weight:normal;white-space:nowrap;">image/png</div><div style="position:absolute;left:1570.5px;top:419.95px;width:190px;text-align:center;height:22.7px;line-height:22.7px;font-size:16.7px;color:#333;font-weight:normal;white-space:nowrap;">2024-02-27 10:23:55</div><div style="position:absolute;left:1782px;top:417.5px;width:27px;height:26px;background:#18bc9c;border-radius:3px;"></div><svg style="position:absolute;left:1789.5px;top:423.0px;" width="12" height="12" viewBox="0 0 15 15"><path d="M10.5 1 L14 4.5 L5 13.5 L1.5 10Z" fill="#fff"/><path d="M1 11 L4 14 L0 15Z" fill="#fff"/></svg><div style="position:absolute;left:1813px;top:417.5px;width:26px;height:26px;background:#f75444;border-radius:3px;"></div><svg style="position:absolute;left:1820.5px;top:423.0px;" width="11" height="13" viewBox="0 0 13 15"><rect x="0" y="2.2" width="13" height="1.8" fill="#fff"/><path d="M4 2.2 V0.8 H9 V2.2" fill="none" stroke="#fff" stroke-width="1.5"/><path d="M1.2 4 H11.8 L11.2 15 H1.8Z" fill="#fff"/><rect x="3.4" y="5.5" width="1.3" height="7.5" fill="#f7a144"/><rect x="5.85" y="5.5" width="1.3" height="7.5" fill="#f7a144"/><rect x="8.3" y="5.5" width="1.3" height="7.5" fill="#f7a144"/></svg><svg style="position:absolute;left:331px;top:511.5px;" width="16" height="16" viewBox="0 0 16 16"><rect x="0.75" y="0.75" width="14.5" height="14.5" rx="2.5" fill="#fff" stroke="#767676" stroke-width="1.5"/></svg><div style="position:absolute;left:368.0px;top:511.94999999999993px;width:90px;text-align:center;height:22.7px;line-height:22.7px;font-size:16.7px;color:#333;font-weight:normal;white-space:nowrap;">121189</div><div style="position:absolute;left:481px;top:511.5px;width:58px;height:23px;background:#1888f0;border-radius:3px;"></div><div style="position:absolute;left:481.0px;top:513.0px;width:58px;text-align:center;height:20px;line-height:20px;font-size:14px;color:#fff;font-weight:bold;white-space:nowrap;">未归类</div><div style="position:absolute;left:747.5px;top:511.94999999999993px;width:220px;text-align:center;height:22.7px;line-height:22.7px;font-size:16.7px;color:#3a97f0;font-weight:normal;white-space:nowrap;">组 11673.png</div><div style="position:absolute;left:970.5px;top:511.94999999999993px;width:105px;text-align:center;height:22.7px;line-height:22.7px;font-size:16.7px;color:#333;font-weight:normal;white-space:nowrap;">366 KB</div><div style="position:absolute;left:1077.5px;top:511.94999999999993px;width:75px;text-align:center;height:22.7px;line-height:22.7px;font-size:16.7px;color:#333;font-weight:normal;white-space:nowrap;">750</div><div style="position:absolute;left:1153.5px;top:511.94999999999993px;width:75px;text-align:center;height:22.7px;line-height:22.7px;font-size:16.7px;color:#333;font-weight:normal;white-space:nowrap;">486</div><div style="position:absolute;left:1231.0px;top:511.94999999999993px;width:105px;text-align:center;height:22.7px;line-height:22.7px;font-size:16.7px;color:#3a97f0;font-weight:normal;white-space:nowrap;">png</div><div style="position:absolute;left:1339.0px;top:511.94999999999993px;width:92px;text-align:center;height:22.7px;line-height:22.7px;font-size:16.7px;color:#3a97f0;font-weight:normal;white-space:nowrap;">alioss</div><div style="position:absolute;left:1433.0px;top:511.94999999999993px;width:135px;text-align:center;height:22.7px;line-height:22.7px;font-size:16.7px;color:#3a97f0;font-weight:normal;white-space:nowrap;">image/png</div><div style="position:absolute;left:1570.5px;top:511.94999999999993px;width:190px;text-align:center;height:22.7px;line-height:22.7px;font-size:16.7px;color:#333;font-weight:normal;white-space:nowrap;">2024-02-27 10:20:25</div><div style="position:absolute;left:1782px;top:509.5px;width:27px;height:26px;background:#18bc9c;border-radius:3px;"></div><svg style="position:absolute;left:1789.5px;top:515.0px;" width="12" height="12" viewBox="0 0 15 15"><path d="M10.5 1 L14 4.5 L5 13.5 L1.5 10Z" fill="#fff"/><path d="M1 11 L4 14 L0 15Z" fill="#fff"/></svg><div style="position:absolute;left:1813px;top:509.5px;width:26px;height:26px;background:#f75444;border-radius:3px;"></div><svg style="position:absolute;left:1820.5px;top:515.0px;" width="11" height="13" viewBox="0 0 13 15"><rect x="0" y="2.2" width="13" height="1.8" fill="#fff"/><path d="M4 2.2 V0.8 H9 V2.2" fill="none" stroke="#fff" stroke-width="1.5"/><path d="M1.2 4 H11.8 L11.2 15 H1.8Z" fill="#fff"/><rect x="3.4" y="5.5" width="1.3" height="7.5" fill="#f7a144"/><rect x="5.85" y="5.5" width="1.3" height="7.5" fill="#f7a144"/><rect x="8.3" y="5.5" width="1.3" height="7.5" fill="#f7a144"/></svg><svg style="position:absolute;left:331px;top:603.5px;" width="16" height="16" viewBox="0 0 16 16"><rect x="0.75" y="0.75" width="14.5" height="14.5" rx="2.5" fill="#fff" stroke="#767676" stroke-width="1.5"/></svg><div style="position:absolute;left:368.0px;top:603.9499999999999px;width:90px;text-align:center;height:22.7px;line-height:22.7px;font-size:16.7px;color:#333;font-weight:normal;white-space:nowrap;">121183</div><div style="position:absolute;left:481px;top:603.5px;width:58px;height:23px;background:#1888f0;border-radius:3px;"></div><div style="position:absolute;left:481.0px;top:605.0px;width:58px;text-align:center;height:20px;line-height:20px;font-size:14px;color:#fff;font-weight:bold;white-space:nowrap;">未归类</div><div style="position:absolute;left:747.5px;top:603.9499999999999px;width:220px;text-align:center;height:22.7px;line-height:22.7px;font-size:16.7px;color:#3a97f0;font-weight:normal;white-space:nowrap;">1695258255965.jpg</div><div style="position:absolute;left:970.5px;top:603.9499999999999px;width:105px;text-align:center;height:22.7px;line-height:22.7px;font-size:16.7px;color:#333;font-weight:normal;white-space:nowrap;">192 KB</div><div style="position:absolute;left:1077.5px;top:603.9499999999999px;width:75px;text-align:center;height:22.7px;line-height:22.7px;font-size:16.7px;color:#333;font-weight:normal;white-space:nowrap;">755</div><div style="position:absolute;left:1153.5px;top:603.9499999999999px;width:75px;text-align:center;height:22.7px;line-height:22.7px;font-size:16.7px;color:#333;font-weight:normal;white-space:nowrap;">757</div><div style="position:absolute;left:1231.0px;top:603.9499999999999px;width:105px;text-align:center;height:22.7px;line-height:22.7px;font-size:16.7px;color:#3a97f0;font-weight:normal;white-space:nowrap;">jpg</div><div style="position:absolute;left:1339.0px;top:603.9499999999999px;width:92px;text-align:center;height:22.7px;line-height:22.7px;font-size:16.7px;color:#3a97f0;font-weight:normal;white-space:nowrap;">alioss</div><div style="position:absolute;left:1433.0px;top:603.9499999999999px;width:135px;text-align:center;height:22.7px;line-height:22.7px;font-size:16.7px;color:#3a97f0;font-weight:normal;white-space:nowrap;">image/jpeg</div><div style="position:absolute;left:1570.5px;top:603.9499999999999px;width:190px;text-align:center;height:22.7px;line-height:22.7px;font-size:16.7px;color:#333;font-weight:normal;white-space:nowrap;">2024-02-27 09:11:00</div><div style="position:absolute;left:1782px;top:601.5px;width:27px;height:26px;background:#18bc9c;border-radius:3px;"></div><svg style="position:absolute;left:1789.5px;top:607.0px;" width="12" height="12" viewBox="0 0 15 15"><path d="M10.5 1 L14 4.5 L5 13.5 L1.5 10Z" fill="#fff"/><path d="M1 11 L4 14 L0 15Z" fill="#fff"/></svg><div style="position:absolute;left:1813px;top:601.5px;width:26px;height:26px;background:#f75444;border-radius:3px;"></div><svg style="position:absolute;left:1820.5px;top:607.0px;" width="11" height="13" viewBox="0 0 13 15"><rect x="0" y="2.2" width="13" height="1.8" fill="#fff"/><path d="M4 2.2 V0.8 H9 V2.2" fill="none" stroke="#fff" stroke-width="1.5"/><path d="M1.2 4 H11.8 L11.2 15 H1.8Z" fill="#fff"/><rect x="3.4" y="5.5" width="1.3" height="7.5" fill="#f7a144"/><rect x="5.85" y="5.5" width="1.3" height="7.5" fill="#f7a144"/><rect x="8.3" y="5.5" width="1.3" height="7.5" fill="#f7a144"/></svg><svg style="position:absolute;left:331px;top:695.5px;" width="16" height="16" viewBox="0 0 16 16"><rect x="0.75" y="0.75" width="14.5" height="14.5" rx="2.5" fill="#fff" stroke="#767676" stroke-width="1.5"/></svg><div style="position:absolute;left:368.0px;top:695.9499999999999px;width:90px;text-align:center;height:22.7px;line-height:22.7px;font-size:16.7px;color:#333;font-weight:normal;white-space:nowrap;">121178</div><div style="position:absolute;left:481px;top:695.5px;width:58px;height:23px;background:#1888f0;border-radius:3px;"></div><div style="position:absolute;left:481.0px;top:697.0px;width:58px;text-align:center;height:20px;line-height:20px;font-size:14px;color:#fff;font-weight:bold;white-space:nowrap;">未归类</div><div style="position:absolute;left:747.5px;top:695.9499999999999px;width:220px;text-align:center;height:22.7px;line-height:22.7px;font-size:16.7px;color:#3a97f0;font-weight:normal;white-space:nowrap;">4.jpg</div><div style="position:absolute;left:970.5px;top:695.9499999999999px;width:105px;text-align:center;height:22.7px;line-height:22.7px;font-size:16.7px;color:#333;font-weight:normal;white-space:nowrap;">453 KB</div><div style="position:absolute;left:1077.5px;top:695.9499999999999px;width:75px;text-align:center;height:22.7px;line-height:22.7px;font-size:16.7px;color:#333;font-weight:normal;white-space:nowrap;">1602</div><div style="position:absolute;left:1153.5px;top:695.9499999999999px;width:75px;text-align:center;height:22.7px;line-height:22.7px;font-size:16.7px;color:#333;font-weight:normal;white-space:nowrap;">2011</div><div style="position:absolute;left:1231.0px;top:695.9499999999999px;width:105px;text-align:center;height:22.7px;line-height:22.7px;font-size:16.7px;color:#3a97f0;font-weight:normal;white-space:nowrap;">jpg</div><div style="position:absolute;left:1339.0px;top:695.9499999999999px;width:92px;text-align:center;height:22.7px;line-height:22.7px;font-size:16.7px;color:#3a97f0;font-weight:normal;white-space:nowrap;">alioss</div><div style="position:absolute;left:1433.0px;top:695.9499999999999px;width:135px;text-align:center;height:22.7px;line-height:22.7px;font-size:16.7px;color:#3a97f0;font-weight:normal;white-space:nowrap;">image/jpeg</div><div style="position:absolute;left:1570.5px;top:695.9499999999999px;width:190px;text-align:center;height:22.7px;line-height:22.7px;font-size:16.7px;color:#333;font-weight:normal;white-space:nowrap;">2024-02-27 09:09:56</div><div style="position:absolute;left:1782px;top:693.5px;width:27px;height:26px;background:#18bc9c;border-radius:3px;"></div><svg style="position:absolute;left:1789.5px;top:699.0px;" width="12" height="12" viewBox="0 0 15 15"><path d="M10.5 1 L14 4.5 L5 13.5 L1.5 10Z" fill="#fff"/><path d="M1 11 L4 14 L0 15Z" fill="#fff"/></svg><div style="position:absolute;left:1813px;top:693.5px;width:26px;height:26px;background:#f75444;border-radius:3px;"></div><svg style="position:absolute;left:1820.5px;top:699.0px;" width="11" height="13" viewBox="0 0 13 15"><rect x="0" y="2.2" width="13" height="1.8" fill="#fff"/><path d="M4 2.2 V0.8 H9 V2.2" fill="none" stroke="#fff" stroke-width="1.5"/><path d="M1.2 4 H11.8 L11.2 15 H1.8Z" fill="#fff"/><rect x="3.4" y="5.5" width="1.3" height="7.5" fill="#f7a144"/><rect x="5.85" y="5.5" width="1.3" height="7.5" fill="#f7a144"/><rect x="8.3" y="5.5" width="1.3" height="7.5" fill="#f7a144"/></svg><svg style="position:absolute;left:331px;top:787.5px;" width="16" height="16" viewBox="0 0 16 16"><rect x="0.75" y="0.75" width="14.5" height="14.5" rx="2.5" fill="#fff" stroke="#767676" stroke-width="1.5"/></svg><div style="position:absolute;left:368.0px;top:787.9499999999999px;width:90px;text-align:center;height:22.7px;line-height:22.7px;font-size:16.7px;color:#333;font-weight:normal;white-space:nowrap;">121173</div><div style="position:absolute;left:481px;top:787.5px;width:58px;height:23px;background:#1888f0;border-radius:3px;"></div><div style="position:absolute;left:481.0px;top:789.0px;width:58px;text-align:center;height:20px;line-height:20px;font-size:14px;color:#fff;font-weight:bold;white-space:nowrap;">未归类</div><div style="position:absolute;left:747.5px;top:787.9499999999999px;width:220px;text-align:center;height:22.7px;line-height:22.7px;font-size:16.7px;color:#3a97f0;font-weight:normal;white-space:nowrap;">3.jpg</div><div style="position:absolute;left:970.5px;top:787.9499999999999px;width:105px;text-align:center;height:22.7px;line-height:22.7px;font-size:16.7px;color:#333;font-weight:normal;white-space:nowrap;">447 KB</div><div style="position:absolute;left:1077.5px;top:787.9499999999999px;width:75px;text-align:center;height:22.7px;line-height:22.7px;font-size:16.7px;color:#333;font-weight:normal;white-space:nowrap;">1602</div><div style="position:absolute;left:1153.5px;top:787.9499999999999px;width:75px;text-align:center;height:22.7px;line-height:22.7px;font-size:16.7px;color:#333;font-weight:normal;white-space:nowrap;">2011</div><div style="position:absolute;left:1231.0px;top:787.9499999999999px;width:105px;text-align:center;height:22.7px;line-height:22.7px;font-size:16.7px;color:#3a97f0;font-weight:normal;white-space:nowrap;">jpg</div><div style="position:absolute;left:1339.0px;top:787.9499999999999px;width:92px;text-align:center;height:22.7px;line-height:22.7px;font-size:16.7px;color:#3a97f0;font-weight:normal;white-space:nowrap;">alioss</div><div style="position:absolute;left:1433.0px;top:787.9499999999999px;width:135px;text-align:center;height:22.7px;line-height:22.7px;font-size:16.7px;color:#3a97f0;font-weight:normal;white-space:nowrap;">image/jpeg</div><div style="position:absolute;left:1570.5px;top:787.9499999999999px;width:190px;text-align:center;height:22.7px;line-height:22.7px;font-size:16.7px;color:#333;font-weight:normal;white-space:nowrap;">2024-02-27 09:08:33</div><div style="position:absolute;left:1782px;top:785.5px;width:27px;height:26px;background:#18bc9c;border-radius:3px;"></div><svg style="position:absolute;left:1789.5px;top:791.0px;" width="12" height="12" viewBox="0 0 15 15"><path d="M10.5 1 L14 4.5 L5 13.5 L1.5 10Z" fill="#fff"/><path d="M1 11 L4 14 L0 15Z" fill="#fff"/></svg><div style="position:absolute;left:1813px;top:785.5px;width:26px;height:26px;background:#f75444;border-radius:3px;"></div><svg style="position:absolute;left:1820.5px;top:791.0px;" width="11" height="13" viewBox="0 0 13 15"><rect x="0" y="2.2" width="13" height="1.8" fill="#fff"/><path d="M4 2.2 V0.8 H9 V2.2" fill="none" stroke="#fff" stroke-width="1.5"/><path d="M1.2 4 H11.8 L11.2 15 H1.8Z" fill="#fff"/><rect x="3.4" y="5.5" width="1.3" height="7.5" fill="#f7a144"/><rect x="5.85" y="5.5" width="1.3" height="7.5" fill="#f7a144"/><rect x="8.3" y="5.5" width="1.3" height="7.5" fill="#f7a144"/></svg><svg style="position:absolute;left:604px;top:210px;" width="96" height="72" viewBox="0 0 96 72">
<defs><linearGradient id="sky" x1="0" y1="0" x2="0" y2="1"><stop offset="0" stop-color="#b4cde6"/><stop offset="0.6" stop-color="#cfdcea"/><stop offset="1" stop-color="#e6ebef"/></linearGradient></defs>
<rect width="96" height="72" fill="url(#sky)"/>
<path d="M52 4 C62 2 85 3 96 6 V28 C86 24 72 20 55 16Z" fill="#eef2f6" opacity="0.85"/>
<path d="M6 28 C20 26 30 30 40 36 V44 H6Z" fill="#eceff2" opacity="0.8"/>
<path d="M0 23 Q6 17 12 23 V50 H0Z" fill="#a7a093"/><path d="M0 23 Q6 17 12 25 V32 H0Z" fill="#4f585c"/><rect x="6" y="17" width="1" height="6" fill="#667"/>
<path d="M85 28 Q91 21 96 27 V50 H85Z" fill="#b9b2a5"/><path d="M85 27 Q91 21 96 27 V35 H85Z" fill="#555f63"/><rect x="91" y="20" width="1" height="6" fill="#667"/>
<rect x="12" y="38" width="74" height="12" fill="#9c968a"/>
<path d="M37 27 Q48 10 59 27Z" fill="#5e6668"/><rect x="47.5" y="10" width="1.2" height="8" fill="#444"/>
<rect x="36" y="26" width="24" height="24" fill="#b0a894"/><rect x="39" y="34" width="18" height="3" fill="#8e8878"/>
<rect x="46" y="42" width="4" height="6" fill="#333"/>
<path d="M12 50 V42 Q16 36 20 42 Q25 36 30 42 Q33 38 36 42 V50Z" fill="#34502b"/>
<path d="M60 50 V42 Q64 36 68 41 Q73 35 78 41 Q82 38 85 42 V50Z" fill="#34502b"/>
<rect x="0" y="50" width="96" height="22" fill="#5f8834"/>
<path d="M0 58 L28 53 L30 55 L0 62Z" fill="#24381d"/>
<path d="M30 58 H70 L72 61 H28Z" fill="#22351c"/>
<path d="M4 70 Q40 63 60 64 Q80 65 96 70 V72 H4Z" fill="#1f321a"/>
<path d="M45 55 H53 V58 H45Z" fill="#b35a52"/>
</svg><svg style="position:absolute;left:588px;top:302px;" width="128" height="72" viewBox="0 0 128 72">
<defs><linearGradient id="ssk" x1="0" y1="0" x2="1" y2="0.3"><stop offset="0" stop-color="#34308c"/><stop offset="0.35" stop-color="#6a3490"/><stop offset="0.6" stop-color="#e28ad8"/><stop offset="1" stop-color="#eca2ea"/></linearGradient>
<linearGradient id="sgr" x1="0" y1="0" x2="0" y2="1"><stop offset="0" stop-color="#a05088"/><stop offset="1" stop-color="#6c3464"/></linearGradient></defs>
<rect width="128" height="72" fill="url(#ssk)"/>
<path d="M62 40 C85 36 110 38 128 40 V54 H60Z" fill="#e86c80"/>
<g fill="#df3b38">
<path d="M88 40 L28 0 H52Z"/>
<path d="M86 38 L50 0 H66Z" opacity="0.9"/>
<path d="M84 42 L8 16 L20 8Z" opacity="0.85"/>
<path d="M86 44 L0 40 L4 30Z" opacity="0.8"/>
<path d="M90 46 L10 54 L30 46Z" opacity="0.9"/>
<path d="M60 30 L128 0 V8Z" opacity="0.85"/>
<path d="M70 26 L110 0 H124Z" opacity="0.7"/>
</g>
<path d="M66 28 L100 12 L80 26Z" fill="#5a3484"/>
<path d="M0 0 H24 L0 24Z" fill="#2e2c88" opacity="0.8"/>
<rect x="0" y="52" width="128" height="20" fill="url(#sgr)"/>
<rect x="0" y="56" width="128" height="2" fill="#b4587a" opacity="0.7"/>
<rect x="0" y="62" width="128" height="3" fill="#4e2c48"/>
<ellipse cx="63" cy="64" rx="8" ry="2.8" fill="#2f4a48"/>
</svg><svg style="position:absolute;left:597px;top:394px;" width="110" height="72" viewBox="0 0 110 72"><rect width="110" height="72" fill="#e9f4f1"/>
<text x="68" y="8" font-size="13" fill="#dcede7" font-family="Liberation Sans" transform="scale(1 1)">SHA</text>
<g transform="translate(1 2) rotate(90)"><text x="0" y="-1" font-size="11" fill="#e0efea" font-family="Liberation Sans">HANGMEI</text></g>
<circle cx="87" cy="46" r="25" fill="#fff"/>
<path d="M88 26 C74 30 68 44 72 56 C75 64 82 68 88 68" fill="none" stroke="#3a9cc5" stroke-width="2.2"/>
<path d="M94 28 C104 32 108 42 106 52 C104 62 96 68 88 68" fill="none" stroke="#e33b3b" stroke-width="2.2"/>
<path d="M96 30 L108 28 L100 34Z" fill="#e33b3b"/>
<path d="M89 34 V58" stroke="#5aa8c8" stroke-width="1.4" stroke-dasharray="3 2"/>
<text x="19" y="27" font-size="5" fill="#444" textLength="44">精选/自然/健康/品质</text>
<text x="5" y="41" font-size="9" font-weight="bold" fill="#22c070" textLength="35">到店预定</text><text x="41" y="41" font-size="9" font-weight="bold" fill="#222" textLength="36">上门服务</text>
<rect x="26" y="47" width="30" height="8" rx="2.5" fill="#33a468"/><text x="33" y="53" font-size="5" fill="#e8fff4" textLength="16">扦护达人</text>
</svg><svg style="position:absolute;left:597px;top:486px;" width="110" height="72" viewBox="0 0 110 72"><rect width="110" height="72" fill="#e9f4f1"/>
<text x="68" y="8" font-size="13" fill="#dcede7" font-family="Liberation Sans" transform="scale(1 1)">SHA</text>
<g transform="translate(1 2) rotate(90)"><text x="0" y="-1" font-size="11" fill="#e0efea" font-family="Liberation Sans">HANGMEI</text></g>
<text x="19" y="27" font-size="5" fill="#444" textLength="44">专业/正规/健康/安全</text>
<text x="6" y="44" font-size="11" font-weight="bold" fill="#22c070" textLength="22">专业</text><text x="30" y="44" font-size="11" font-weight="bold" fill="#222" textLength="47">上门按摩</text>
<rect x="26" y="50" width="30" height="8" rx="2.5" fill="#33a468"/><text x="34" y="56" font-size="5" fill="#e8fff4" textLength="14">立即下单</text>
<path d="M84 21 H110 V72 H84Z" fill="#30b878"/>
<path d="M86 16 C86 8 103 8 103 16 V33 H86Z" fill="#1c1c1c"/>
<ellipse cx="94.5" cy="25" rx="5" ry="7" fill="#f0d2c4"/>
<path d="M77 72 C77 44 80 36 94 34 C108 36 110 44 110 72Z" fill="#777"/>
<path d="M90 35 L95 48 L100 35Z" fill="#f2e6e0"/>
<path d="M86 60 C92 58 100 58 106 60 L106 64 C100 62 92 62 86 64Z" fill="#e8c8b8"/>
</svg><svg style="position:absolute;left:616px;top:579px;" width="72" height="72" viewBox="0 0 72 72"><rect width="72" height="72" fill="#fdfdfd"/><g transform="translate(0.0 0)"><path d="M31 10 C30 4 42 3 43 9 L44 20 L41 22 L40 12Z" fill="#161616"/><ellipse cx="36" cy="13" rx="4.8" ry="6.5" fill="#f3dcd0"/><path d="M31 8 C32 4 42 4 42 10 C38 8 34 8 31 10Z" fill="#161616"/><circle cx="36.5" cy="17" r="0.9" fill="#e77"/><path d="M33 20 H39 V24 H33Z" fill="#f0d8cc"/><path d="M29 24 C33 23 38 23 43 24 L48 33 L45 35 L43 32 L42 44 H30 C28 38 27 30 29 24Z" fill="#141414"/><path d="M46 34 L51 40 L44 47 L42 45 L47 40 L44 36Z" fill="#efcfc0"/><path d="M29 30 C27 38 27 48 29 58 L31 58 C30 48 30 40 31 32Z" fill="#f0d2c4" opacity="0.85"/><rect x="29" y="43" width="13" height="3" fill="#8ccf3c"/><path d="M31 46 H43 C44 54 44 64 43 72 H37 L36 60 L32 72 H25 C27 64 30 56 31 46Z" fill="#121212"/></g></svg><svg style="position:absolute;left:623.5px;top:671px;" width="57" height="72" viewBox="0 0 57 72"><g transform="translate(-7.5 0)"><path d="M31 10 C30 4 42 3 43 9 L44 20 L41 22 L40 12Z" fill="#161616"/><ellipse cx="36" cy="13" rx="4.8" ry="6.5" fill="#f3dcd0"/><path d="M31 8 C32 4 42 4 42 10 C38 8 34 8 31 10Z" fill="#161616"/><circle cx="36.5" cy="17" r="0.9" fill="#e77"/><path d="M33 20 H39 V24 H33Z" fill="#f0d8cc"/><path d="M29 24 C33 23 38 23 43 24 L48 33 L45 35 L43 32 L42 44 H30 C28 38 27 30 29 24Z" fill="#141414"/><path d="M46 34 L51 40 L44 47 L42 45 L47 40 L44 36Z" fill="#efcfc0"/><path d="M29 30 C27 38 27 48 29 58 L31 58 C30 48 30 40 31 32Z" fill="#f0d2c4" opacity="0.85"/><rect x="29" y="43" width="13" height="3" fill="#8ccf3c"/><path d="M31 46 H43 C44 54 44 64 43 72 H37 L36 60 L32 72 H25 C27 64 30 56 31 46Z" fill="#121212"/></g></svg><svg style="position:absolute;left:624px;top:763px;" width="57" height="72" viewBox="0 0 57 72">
<rect width="57" height="72" fill="#fdfdfd"/>
<path d="M24 10 C23 4 34 3 35 9 L36 26 L33 26 L32 12Z" fill="#1a1a1a"/>
<path d="M22 26 C22 18 24 10 26 8 L25 24Z" fill="#2a1a18"/>
<ellipse cx="29" cy="13" rx="4.5" ry="6" fill="#f3dcd0"/>
<path d="M24 9 C25 5 34 5 34 10 C30 8 27 8 24 11Z" fill="#1a1a1a"/>
<circle cx="29.5" cy="17" r="0.9" fill="#e66"/>
<path d="M18 17 C19 15 21 15 22 18 L22 28 L19 34 L17 32 L19 26Z" fill="#efcfc0"/>
<path d="M21 28 C24 24 30 22 36 24 L43 38 L40 40 L36 34 L35 48 H24 C22 40 20 34 21 28Z" fill="#141414"/>
<path d="M27 25 L31 40 L36 42" fill="none" stroke="#f4f4f4" stroke-width="1"/>
<path d="M40 40 L32 47 L30 45 L37 39Z" fill="#efcfc0"/>
<path d="M24 48 H36 C36 56 35 64 34 72 H28 L27 60 L22 72 H16 C18 64 22 56 24 48Z" fill="#121212"/>
</svg><svg style="position:absolute;left:646px;top:858px;" width="16" height="9" viewBox="0 0 16 9"><path d="M2 9 C2 2 14 2 14 9Z" fill="#1a1a1a"/><ellipse cx="8" cy="8" rx="4" ry="3" fill="#e9d0c4"/></svg><div style="position:absolute;left:1895px;top:62px;width:25px;height:805px;background:#f1f1f1;"></div><div style="position:absolute;left:1897px;top:173px;width:21px;height:465px;background:#c1c1c1;"></div><svg style="position:absolute;left:1902px;top:71px;" width="11" height="6" viewBox="0 0 11 6"><path d="M0 6 L5.5 0 L11 6Z" fill="#505050"/></svg><svg style="position:absolute;left:1902px;top:852px;" width="11" height="6" viewBox="0 0 11 6"><path d="M0 0 L5.5 6 L11 0Z" fill="#505050"/></svg><svg style="position:absolute;left:1766px;top:832px;" width="36" height="35" viewBox="0 0 36 35"><path d="M6 0 H36 V35 H0 V6 Q0 0 6 0Z" fill="#6db33f"/><path d="M4 1 L18 15 L34 1Z" fill="#86c45a"/><path d="M0 35 L18 22 L36 35Z" fill="#5ea534" opacity="0.6"/><path d="M22 6 C28 12 24 17 16 21 C10 24 8 27 10 31 C4 28 4 22 12 18 C20 14 24 11 22 6Z" fill="#fff"/><path d="M26 14 C32 20 28 26 20 29 C15 31 13 33 14 35 H10 C8 31 10 27 18 24 C24 21 28 19 26 14Z" fill="#fff"/></svg><div style="position:absolute;left:1802px;top:832px;width:93px;height:35px;background:#222;"></div><div style="position:absolute;left:1802.0px;top:838.0px;width:93px;text-align:center;height:23px;line-height:23px;font-size:17px;color:#fff;font-weight:normal;white-space:nowrap;">0.062719s</div>
</body></html>
